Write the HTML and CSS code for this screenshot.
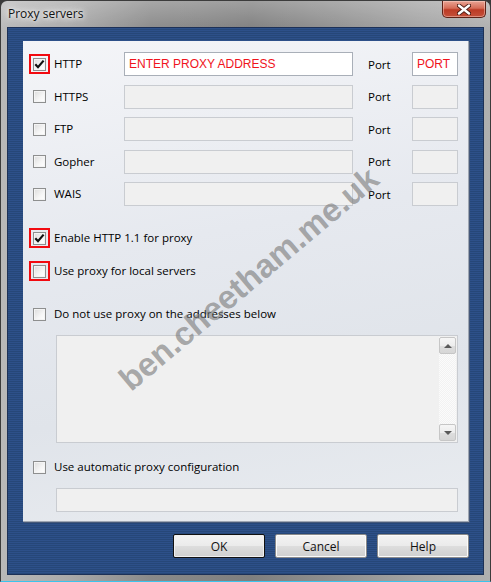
FILE: index.html
```html
<!DOCTYPE html>
<html>
<head>
<meta charset="utf-8">
<title>Proxy servers</title>
<link rel="stylesheet" href="styles.css">
</head>
<body>
<div class="window">
  <div class="titlebar">
    <span class="title">Proxy servers</span>
    <div class="close">
      <svg width="14" height="11" viewBox="0 0 14 11"><path d="M2 1.5 L12 9.5 M12 1.5 L2 9.5" stroke="#4a1a12" stroke-width="4.2" stroke-linecap="round"/><path d="M2 1.5 L12 9.5 M12 1.5 L2 9.5" stroke="#ffffff" stroke-width="2.4" stroke-linecap="round"/></svg>
    </div>
  </div>
  <div class="client">
    <div class="panel">
      <div class="proxies">
        <span class="cbcell hl"><span class="cb"><svg width="13" height="13" viewBox="0 0 13 13"><path d="M2.3 6.3 L5 9.2 L10.6 2.6" fill="none" stroke="#111" stroke-width="2.2"/></svg></span></span>
        <span class="lbl">HTTP</span>
        <span class="field on">ENTER PROXY ADDRESS</span>
        <span class="portlbl">Port</span>
        <span class="field on">PORT</span>

        <span class="cbcell"><span class="cb"></span></span>
        <span class="lbl">HTTPS</span>
        <span class="field"></span>
        <span class="portlbl">Port</span>
        <span class="field"></span>

        <span class="cbcell"><span class="cb"></span></span>
        <span class="lbl">FTP</span>
        <span class="field"></span>
        <span class="portlbl">Port</span>
        <span class="field"></span>

        <span class="cbcell"><span class="cb"></span></span>
        <span class="lbl">Gopher</span>
        <span class="field"></span>
        <span class="portlbl">Port</span>
        <span class="field"></span>

        <span class="cbcell"><span class="cb"></span></span>
        <span class="lbl">WAIS</span>
        <span class="field"></span>
        <span class="portlbl">Port</span>
        <span class="field"></span>
      </div>

      <div class="opt opt-enable">
        <span class="cbcell hl"><span class="cb"><svg width="13" height="13" viewBox="0 0 13 13"><path d="M2.3 6.3 L5 9.2 L10.6 2.6" fill="none" stroke="#111" stroke-width="2.2"/></svg></span></span>
        <span class="lbl">Enable HTTP 1.1 for proxy</span>
      </div>
      <div class="opt opt-local">
        <span class="cbcell hl"><span class="cb"></span></span>
        <span class="lbl">Use proxy for local servers</span>
      </div>
      <div class="opt opt-bypass">
        <span class="cbcell"><span class="cb"></span></span>
        <span class="lbl">Do not use proxy on the addresses below</span>
      </div>
      <div class="listbox">
        <div class="vscroll">
          <span class="sbtn"><span class="arrow up"></span></span>
          <span class="sbtn"><span class="arrow down"></span></span>
        </div>
      </div>
      <div class="opt opt-auto">
        <span class="cbcell"><span class="cb"></span></span>
        <span class="lbl">Use automatic proxy configuration</span>
      </div>
      <div class="field autofield"></div>
    </div>
    <div class="buttons">
      <span class="btn default">OK</span>
      <span class="btn">Cancel</span>
      <span class="btn">Help</span>
    </div>
  </div>
  <div class="watermark">ben.cheetham.me.uk</div>
</div>
</body>
</html>
```
FILE: styles.css
```css
html, body {
  margin: 0;
  padding: 0;
  background: #3a3a3a;
}
body {
  width: 491px;
  height: 582px;
  overflow: hidden;
  font-family: "Open Sans", "Noto Sans", sans-serif;
  font-size: 11.5px;
  color: #000;
}
.window {
  position: relative;
  box-sizing: border-box;
  width: 491px;
  height: 582px;
  border: 1px solid #3c3c3c;
  border-bottom-color: #3cc4ec;
  border-radius: 7px 7px 0 0;
  background:
    linear-gradient(to bottom, rgba(255,255,255,0.25), rgba(255,255,255,0) 30px),
    linear-gradient(to right, #b9b9b9 0, #a9a9a9 70px, #8a8a8a 150px, #7f7f7f 250px, #8f8f8f 330px, #a4a4a4 420px, #b0b0b0 491px);
  display: flex;
  flex-direction: column;
  overflow: hidden;
}
.titlebar {
  height: 26px;
  flex: none;
  display: flex;
  justify-content: space-between;
  align-items: flex-start;
  padding-left: 7px;
}
.title {
  padding-top: 5px;
  line-height: 16px;
  font-size: 12px;
  color: #111;
  text-shadow: 0 0 6px #f2f2f2, 0 0 10px #ffffff, 0 0 3px #e8e8e8;
}
.close {
  width: 44px;
  height: 17px;
  margin-right: 4px;
  box-sizing: border-box;
  border: 1px solid #5e2116;
  border-top: none;
  border-radius: 0 0 5px 5px;
  background: linear-gradient(to bottom, #e9a494 0, #d56c57 45%, #bc3b25 55%, #c4503a 100%);
  box-shadow: inset 0 0 0 1px rgba(255,220,210,0.45);
  display: flex;
  align-items: center;
  justify-content: center;
}
.client {
  flex: 1;
  margin: 0 6px 6px 6px;
  box-sizing: border-box;
  border: 1px solid #1d3157;
  background: repeating-linear-gradient(to bottom, #2d5089 0, #2d5089 1px, #264778 1px, #264778 2px);
  padding: 13px 14px 16px 15px;
  display: flex;
  flex-direction: column;
}
.panel {
  flex: none;
  box-sizing: border-box;
  height: 481px;
  background: linear-gradient(170deg, #f4f5f8 0%, #e6e9ef 40%, #e0e4ea 70%, #e9ecf0 100%);
  border-right: 1px solid #9ea6b2;
  border-bottom: 1px solid #9ea6b2;
  box-shadow: 1px 1px 0 #46597a;
  padding: 11px 10px 9px 6px;
  display: flex;
  flex-direction: column;
}
.panel > * {
  flex: none;
}
.proxies {
  display: grid;
  grid-template-columns: 21px 74px 229px 59px 46px;
  grid-auto-rows: 24px;
  row-gap: 8.5px;
  align-items: center;
}
.cbcell {
  box-sizing: border-box;
  width: 21px;
  height: 20px;
  border: 2px solid transparent;
  display: flex;
  align-items: center;
  justify-content: center;
}
.cbcell.hl {
  border-color: #f20a10;
}
.cb {
  box-sizing: border-box;
  width: 13px;
  height: 13px;
  border: 1px solid #8e8f8f;
  background: linear-gradient(135deg, #dcdcdc 0%, #f6f6f6 60%, #ffffff 100%);
  box-shadow: inset 0 0 0 1px #f4f4f4;
  position: relative;
}
.cb svg {
  position: absolute;
  left: -1px;
  top: -1px;
}
.lbl {
  padding-left: 4px;
  white-space: nowrap;
  line-height: 16px;
}
.portlbl {
  padding-left: 15px;
}
.field {
  box-sizing: border-box;
  height: 24px;
  background: #f0f0f0;
  border: 1px solid #c9ccd1;
  display: flex;
  align-items: center;
  padding-left: 4px;
  font-family: "Liberation Sans", Arial, sans-serif;
  font-size: 12px;
  color: #f0141c;
}
.field.on {
  background: #ffffff;
  border-color: #a9afb8;
}
.opt {
  display: flex;
  align-items: center;
  height: 20px;
}
.opt-enable { margin-top: 22px; }
.opt-local { margin-top: 13px; }
.opt-bypass { margin-top: 23px; }
.opt-auto { margin-top: 14px; }
.listbox {
  margin-top: 11px;
  margin-left: 27px;
  width: 402px;
  height: 108px;
  box-sizing: border-box;
  border: 1px solid #c9ccd1;
  background: #f0f0f0;
  display: flex;
  justify-content: flex-end;
  padding: 1px;
}
.vscroll {
  width: 17px;
  display: flex;
  flex-direction: column;
  justify-content: space-between;
  background: repeating-conic-gradient(#f2f2f2 0 25%, #fbfbfb 0 50%) 0 0 / 2px 2px;
}
.sbtn {
  box-sizing: border-box;
  height: 17px;
  border: 1px solid #c6c6c6;
  border-radius: 2px;
  background: linear-gradient(to bottom, #f6f6f6 0%, #ededed 50%, #dedede 51%, #d6d6d6 100%);
  display: flex;
  align-items: center;
  justify-content: center;
}
.arrow {
  width: 0;
  height: 0;
  border-left: 4px solid transparent;
  border-right: 4px solid transparent;
}
.arrow.up { border-bottom: 4px solid #5a5a5a; }
.arrow.down { border-top: 4px solid #5a5a5a; }
.autofield {
  margin-top: 11px;
  margin-left: 27px;
  width: 402px;
}
.buttons {
  margin-top: 12px;
  display: flex;
  justify-content: flex-end;
  gap: 10px;
}
.btn {
  box-sizing: border-box;
  width: 92px;
  height: 24px;
  border: 1px solid #8a8a8a;
  border-radius: 2px;
  background: linear-gradient(to bottom, #f3f3f3 0%, #ebebeb 48%, #dddddd 52%, #cfcfcf 100%);
  box-shadow: inset 0 0 0 1px #fbfbfb;
  display: flex;
  align-items: center;
  justify-content: center;
  font-size: 12px;
  color: #111;
}
.btn.default {
  border-color: #111;
  box-shadow: inset 0 0 0 1px #f0f0f0;
}
.watermark {
  position: absolute;
  left: 248px;
  top: 278px;
  transform: translate(-50%, -50%) rotate(-40deg);
  font-family: "Liberation Sans", Arial, sans-serif;
  font-weight: bold;
  font-size: 33px;
  white-space: nowrap;
  color: rgba(120, 120, 120, 0.62);
  pointer-events: none;
}
```
